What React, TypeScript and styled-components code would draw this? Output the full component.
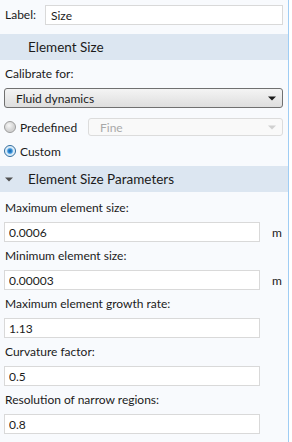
import React from 'react';
import styled, { createGlobalStyle } from 'styled-components';

const GlobalStyle = createGlobalStyle`
   html, body {
      margin: 0;
      padding: 0;
      background: #ffffff;
   }
   body {
      font-family: Lato, 'Open Sans', sans-serif;
      font-size: 12px;
      color: #1b1b1b;
   }
`;

type Field = { label: string; value: string; unit?: string };

const FIELDS: Field[] = [
   { label: 'Maximum element size:', value: '0.0006', unit: 'm' },
   { label: 'Minimum element size:', value: '0.00003', unit: 'm' },
   { label: 'Maximum element growth rate:', value: '1.13' },
   { label: 'Curvature factor:', value: '0.5' },
   { label: 'Resolution of narrow regions:', value: '0.8' },
];

function Caret({ color = '#1a1a1a' }: { color?: string }) {
   return (
      <svg width="8" height="5" viewBox="0 0 8 5">
         <path d="M0 0.5 H8 L4 4.5 Z" fill={color} />
      </svg>
   );
}

export default function App() {
   return (
      <Panel>
         <GlobalStyle />
         <LabelRow>
            <span>Label:</span>
            <TextBox readOnly value="Size" />
         </LabelRow>

         <SectionHead>
            <HeadIcon />
            Element Size
         </SectionHead>
         <Section>
            <FieldLabel>Calibrate for:</FieldLabel>
            <Combo>
               <span>Fluid dynamics</span>
               <Caret />
            </Combo>
            <RadioRow>
               <Radio />
               <RadioText>Predefined</RadioText>
               <Combo disabled>
                  <span>Fine</span>
                  <Caret color="#d0d0d0" />
               </Combo>
            </RadioRow>
            <RadioRow $short>
               <Radio checked />
               <RadioText>Custom</RadioText>
            </RadioRow>
         </Section>

         <SectionHead>
            <HeadIcon>
               <Caret color="#505050" />
            </HeadIcon>
            Element Size Parameters
         </SectionHead>
         <Section $top={2}>
            {FIELDS.map((f) => (
               <FieldBlock key={f.label}>
                  <FieldLabel>{f.label}</FieldLabel>
                  <FieldRow>
                     <TextBox readOnly value={f.value} $pad={4} />
                     <Unit>{f.unit}</Unit>
                  </FieldRow>
               </FieldBlock>
            ))}
         </Section>
      </Panel>
   );
}

const Panel = styled.div`
   width: 289px;
   height: 442px;
   box-sizing: border-box;
   background: #f8fafd;
   border-right: 1px solid #9fcdf4;
   overflow: hidden;
`;

const LabelRow = styled.div`
   display: flex;
   align-items: flex-start;
   gap: 9px;
   padding: 5px 5px 0 5px;
   height: 34px;
   box-sizing: border-box;

   span {
      line-height: 20px;
   }
`;

const TextBox = styled.input<{ $pad?: number }>`
   flex: 1;
   min-width: 0;
   height: 20px;
   box-sizing: border-box;
   border: 1px solid #d9d9d9;
   background: #ffffff;
   padding: 0 0 0 ${(p) => p.$pad ?? 5}px;
   font: inherit;
   color: #1b1b1b;
   outline: none;
`;

const SectionHead = styled.div`
   display: flex;
   align-items: center;
   height: 26px;
   background: #dce6f1;
   font-size: 13.5px;
   color: #1b1b1b;
`;

const HeadIcon = styled.span`
   width: 28px;
   display: flex;
   padding-left: 5px;
   box-sizing: border-box;
`;

const Section = styled.div<{ $top?: number }>`
   padding: ${(p) => p.$top ?? 0}px 5px 0 4px;
`;

const FieldLabel = styled.div`
   line-height: 28px;
   height: 28px;
   padding-left: 1px;
`;

const Combo = styled.div<{ disabled?: boolean }>`
   flex: 1;
   height: ${(p) => (p.disabled ? 18 : 20)}px;
   box-sizing: border-box;
   display: flex;
   align-items: center;
   justify-content: space-between;
   padding: 0 6px 0 11px;
   border-radius: 3px;
   border: 1px solid ${(p) => (p.disabled ? '#dcdcdc' : '#707070')};
   background: ${(p) =>
      p.disabled ? '#f9f9f9' : 'linear-gradient(#f4f4f4, #dedede)'};
   color: ${(p) => (p.disabled ? '#a9a9a9' : '#1b1b1b')};
`;

const RadioRow = styled.div<{ $short?: boolean }>`
   display: flex;
   align-items: center;
   height: ${(p) => (p.$short ? 22 : 26)}px;
   margin-top: ${(p) => (p.$short ? 0 : 6)}px;
   margin-bottom: ${(p) => (p.$short ? 4 : 0)}px;
`;

const Radio = styled.span<{ checked?: boolean }>`
   width: 12px;
   height: 12px;
   border-radius: 50%;
   box-sizing: border-box;
   border: 1px solid ${(p) => (p.checked ? '#2f6c9e' : '#9c9c9c')};
   background: ${(p) =>
      p.checked
         ? 'radial-gradient(circle, #0f5fa8 0, #3a94dc 2.2px, #cfe6f7 3.4px, #eaf4fb 5px)'
         : 'radial-gradient(circle at 40% 35%, #f7f7f7 0, #d4d4d4 5px)'};
`;

const RadioText = styled.span`
   margin-left: 4px;
   width: 68px;
`;

const FieldBlock = styled.div``;

const FieldRow = styled.div`
   display: flex;
   align-items: center;

   ${TextBox} {
      flex: 0 0 256px;
   }
`;

const Unit = styled.span`
   margin-left: 12px;
`;
